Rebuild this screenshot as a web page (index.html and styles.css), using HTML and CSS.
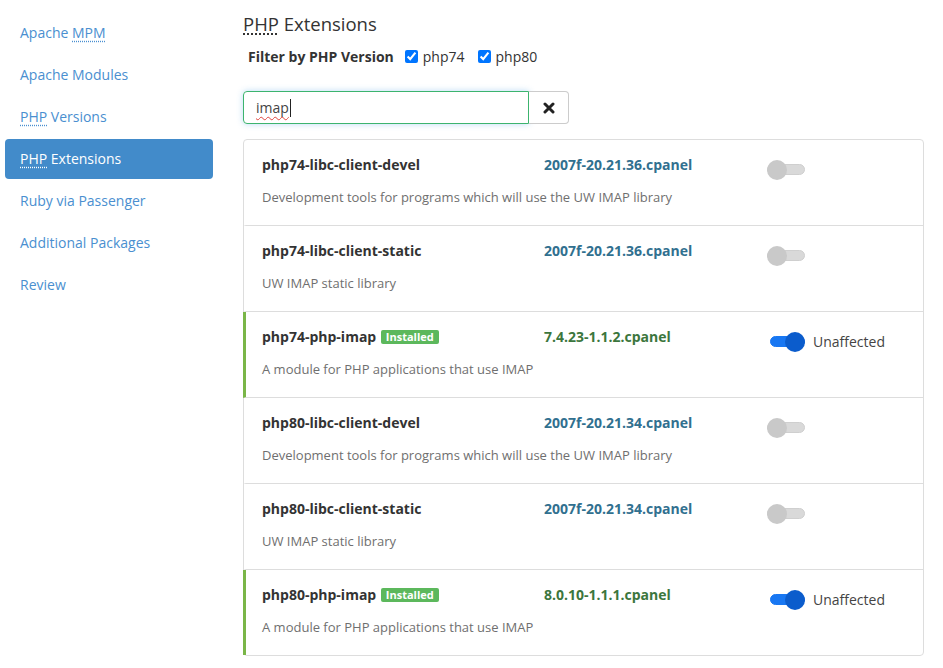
FILE: index.html
```html
<!DOCTYPE html>
<html lang="en">

<head>
    <meta charset="UTF-8">
    <title>PHP Extensions</title>
    <link rel="stylesheet" href="styles.css">
</head>

<body>
    <div class="page">
        <ul class="side-nav">
            <li><a href="#">Apache <abbr title="Multi-Processing Module">MPM</abbr></a></li>
            <li><a href="#">Apache Modules</a></li>
            <li><a href="#"><abbr title="PHP: Hypertext Preprocessor">PHP</abbr> Versions</a></li>
            <li class="active"><a href="#"><abbr title="PHP: Hypertext Preprocessor">PHP</abbr> Extensions</a></li>
            <li><a href="#">Ruby via Passenger</a></li>
            <li><a href="#">Additional Packages</a></li>
            <li><a href="#">Review</a></li>
        </ul>

        <div class="main">
            <h2 class="page-title"><abbr title="PHP: Hypertext Preprocessor">PHP</abbr> Extensions</h2>

            <div class="filter-row">
                <span class="filter-label">Filter by PHP Version</span>
                <label class="version-check"><input type="checkbox" checked> php74</label>
                <label class="version-check"><input type="checkbox" checked> php80</label>
            </div>

            <div class="search-group">
                <div class="search-input"><span class="misspelled">imap</span><span class="caret"></span></div>
                <button class="clear-btn" title="Clear">
                    <svg width="12" height="12" viewBox="0 0 12 12">
                        <path d="M2 2 L10 10 M10 2 L2 10" stroke="#222" stroke-width="3" stroke-linecap="round"/>
                    </svg>
                </button>
            </div>

            <div class="package-list">
                <div class="package">
                    <div class="pkg-name">php74-libc-client-devel</div>
                    <div class="pkg-version">2007f-20.21.36.cpanel</div>
                    <div class="pkg-toggle"><span class="switch"></span></div>
                    <div class="pkg-desc">Development tools for programs which will use the UW IMAP library</div>
                </div>
                <div class="package">
                    <div class="pkg-name">php74-libc-client-static</div>
                    <div class="pkg-version">2007f-20.21.36.cpanel</div>
                    <div class="pkg-toggle"><span class="switch"></span></div>
                    <div class="pkg-desc">UW IMAP static library</div>
                </div>
                <div class="package installed">
                    <div class="pkg-name">php74-php-imap <span class="badge">Installed</span></div>
                    <div class="pkg-version">7.4.23-1.1.2.cpanel</div>
                    <div class="pkg-toggle"><span class="switch on"></span> <span class="state">Unaffected</span></div>
                    <div class="pkg-desc">A module for PHP applications that use IMAP</div>
                </div>
                <div class="package">
                    <div class="pkg-name">php80-libc-client-devel</div>
                    <div class="pkg-version">2007f-20.21.34.cpanel</div>
                    <div class="pkg-toggle"><span class="switch"></span></div>
                    <div class="pkg-desc">Development tools for programs which will use the UW IMAP library</div>
                </div>
                <div class="package">
                    <div class="pkg-name">php80-libc-client-static</div>
                    <div class="pkg-version">2007f-20.21.34.cpanel</div>
                    <div class="pkg-toggle"><span class="switch"></span></div>
                    <div class="pkg-desc">UW IMAP static library</div>
                </div>
                <div class="package installed">
                    <div class="pkg-name">php80-php-imap <span class="badge">Installed</span></div>
                    <div class="pkg-version">8.0.10-1.1.1.cpanel</div>
                    <div class="pkg-toggle"><span class="switch on"></span> <span class="state">Unaffected</span></div>
                    <div class="pkg-desc">A module for PHP applications that use IMAP</div>
                </div>
            </div>
        </div>
    </div>
</body>

</html>
```

FILE: styles.css
```css
body {
    font-family: 'Open Sans', sans-serif;
    font-size: 14px;
    color: #333;
    background-color: #fff;
    margin: 0;
    padding: 0;
}

.page {
    display: flex;
    align-items: flex-start;
}

abbr {
    text-decoration: underline dotted;
    text-underline-offset: 3px;
}

/* left navigation */

.side-nav {
    list-style: none;
    width: 208px;
    margin: 0 0 0 5px;
    padding: 13px 0 0;
    flex-shrink: 0;
}

.side-nav li {
    margin-bottom: 2px;
}

.side-nav a {
    display: block;
    height: 40px;
    line-height: 40px;
    padding: 0 15px;
    color: #4a8fd0;
    text-decoration: none;
    border-radius: 4px;
}

.side-nav li.active a {
    background-color: #428bca;
    color: #fff;
}

/* main column */

.main {
    flex: 1;
    margin-left: 30px;
    margin-right: 19px;
}

.page-title {
    font-size: 18.5px;
    font-weight: 400;
    line-height: 28px;
    margin: 10px 0 0;
    color: #333;
}

.filter-row {
    display: flex;
    align-items: center;
    margin: 5px 0 0 5px;
    height: 26px;
}

.filter-label {
    font-weight: 700;
    margin-right: 11px;
}

.version-check {
    display: flex;
    align-items: center;
    margin-right: 13px;
}

.version-check input {
    margin: 0 5px 0 0;
    width: 13px;
    height: 13px;
}

.search-group {
    display: flex;
    margin-top: 22px;
    width: 326px;
    height: 33px;
}

.search-input {
    flex: 1;
    box-sizing: border-box;
    border: 1px solid #3cb46e;
    border-radius: 4px 0 0 4px;
    box-shadow: 0 0 6px rgba(102, 175, 233, 0.45);
    padding: 0 12px;
    line-height: 31px;
    font-size: 14px;
    color: #444;
    display: flex;
    align-items: center;
}

.misspelled {
    text-decoration: underline wavy #e0443e;
    text-decoration-thickness: 1px;
    text-underline-offset: 3px;
}

.caret {
    display: inline-block;
    width: 1px;
    height: 18px;
    background: #222;
    margin-left: 1px;
}

.clear-btn {
    width: 40px;
    box-sizing: border-box;
    border: 1px solid #ccc;
    border-left: none;
    border-radius: 0 4px 4px 0;
    background: #fff;
    display: flex;
    align-items: center;
    justify-content: center;
    padding: 0;
}

/* package list */

.package-list {
    margin-top: 15px;
    border: 1px solid #ddd;
    border-radius: 4px;
}

.package {
    display: grid;
    grid-template-columns: 282px 223px 1fr;
    grid-template-rows: 20px auto;
    row-gap: 12px;
    padding: 15px 0 18px 16px;
    border-left: 3px solid transparent;
    border-bottom: 1px solid #ddd;
    margin-left: -1px;
}

.package:last-child {
    border-bottom: none;
}

.package.installed {
    border-left-color: #7ab648;
}

.pkg-name {
    font-weight: 700;
    line-height: 20px;
    color: #333;
}

.pkg-version {
    font-weight: 700;
    line-height: 20px;
    color: #31708f;
}

.installed .pkg-version {
    color: #3c763d;
}

.pkg-desc {
    grid-column: 1 / 4;
    font-size: 13px;
    line-height: 20px;
    color: #6f6f6f;
}

.badge {
    display: inline-block;
    background-color: #5cb85c;
    color: #fff;
    font-size: 11px;
    font-weight: 700;
    line-height: 14px;
    padding: 0 5px;
    border-radius: 2px;
    vertical-align: 1px;
    margin-left: 1px;
}

.pkg-toggle {
    display: flex;
    align-items: center;
    margin-top: 4px;
    height: 20px;
}

.switch {
    position: relative;
    display: inline-block;
    width: 38px;
    height: 11px;
    border-radius: 6px;
    background-color: #d9d9d9;
    border: 1px solid #cfcfcf;
    box-sizing: border-box;
}

.switch::after {
    content: "";
    position: absolute;
    left: -1px;
    top: -5px;
    width: 20px;
    height: 20px;
    border-radius: 50%;
    background-color: #c9c9c9;
}

.switch.on {
    background-color: #1877f2;
    border-color: #1877f2;
    width: 35px;
    margin-left: 3px;
}

.switch.on::after {
    left: auto;
    right: -1px;
    background-color: #0b5ccc;
}

.state {
    margin-left: 8px;
    color: #444;
}
```
